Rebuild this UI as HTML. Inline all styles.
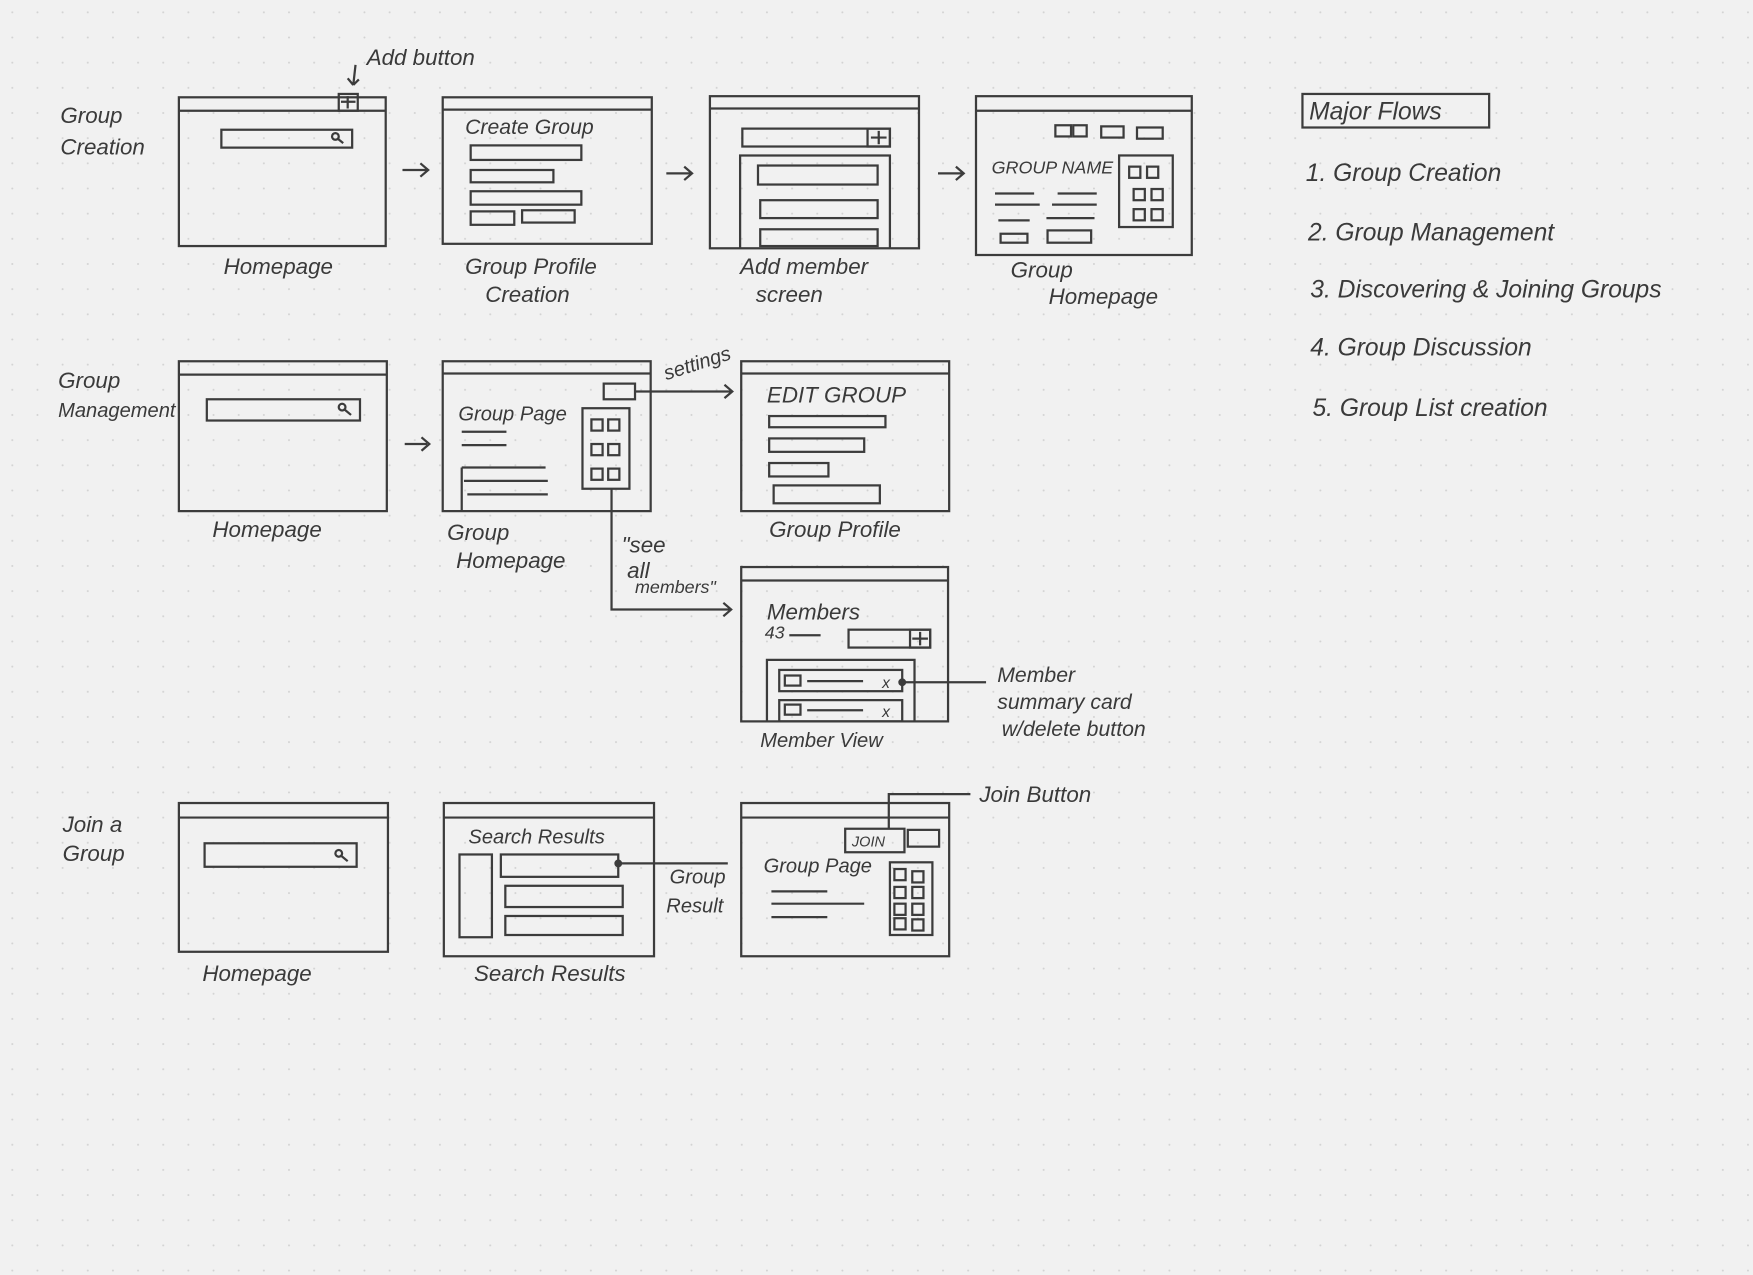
<!DOCTYPE html>
<html><head><meta charset="utf-8"><style>
html,body{margin:0;padding:0;background:#f1f1f1;}
svg{display:block;width:1753px;height:1275px;}
text{font-family:"Liberation Sans",sans-serif;font-style:italic;fill:#3a3a3a;}
</style></head><body>
<svg viewBox="0 0 1568 1140" preserveAspectRatio="none" xmlns="http://www.w3.org/2000/svg">
<defs>
<pattern id="dots" width="22.5" height="22.5" patternUnits="userSpaceOnUse"><circle cx="11" cy="11" r="0.9" fill="#d2d2d2"/></pattern>
</defs>
<rect width="1568" height="1140" fill="#f1f1f1"/>
<rect width="1568" height="1140" fill="url(#dots)"/>
<g fill="none" stroke="#3c3c3c" stroke-width="2">
<rect x="160" y="87" width="185" height="133"/><line x1="160" y1="99" x2="345" y2="99"/>
<rect x="303" y="84" width="17" height="15"/><path d="M311 86v11M305 91h13"/>
<rect x="198" y="116" width="117" height="16"/><circle cx="300" cy="122" r="3"/><path d="M302 124l5 4"/>
<path d="M318 58l-2 18M316 76l-5-6M316 76l5-5"/>
<rect x="396" y="87" width="187" height="131"/><line x1="396" y1="98" x2="583" y2="98"/>
<rect x="421" y="130" width="99" height="13"/><rect x="421" y="152" width="74" height="11"/><rect x="421" y="171" width="99" height="12"/><rect x="421" y="189" width="39" height="12"/><rect x="467" y="188" width="47" height="11"/>
<rect x="635" y="86" width="187" height="136"/><line x1="635" y1="97" x2="822" y2="97"/>
<rect x="664" y="115" width="132" height="16"/><rect x="776" y="115" width="20" height="16"/><path d="M786 117v12M779 123h14"/>
<path d="M662 222V139h134v83"/>
<rect x="678" y="148" width="107" height="17"/><rect x="680" y="179" width="105" height="16"/><rect x="680" y="205" width="105" height="15"/>
<rect x="873" y="86" width="193" height="142"/><line x1="873" y1="99" x2="1066" y2="99"/>
<rect x="944" y="112" width="14" height="10"/><rect x="960" y="112" width="12" height="10"/><rect x="985" y="113" width="20" height="10"/><rect x="1017" y="114" width="23" height="10"/>
<rect x="1001" y="139" width="48" height="64"/>
<rect x="1010" y="149" width="10" height="10"/><rect x="1026" y="149" width="10" height="10"/><rect x="1014" y="169" width="10" height="10"/><rect x="1030" y="169" width="10" height="10"/><rect x="1014" y="187" width="10" height="10"/><rect x="1030" y="187" width="10" height="10"/>
<path d="M890 173h35M946 173h35M890 183h40M941 183h40M893 197h28M936 195h43"/><rect x="895" y="209" width="24" height="8"/><rect x="937" y="206" width="39" height="11"/>
<path d="M360 152h22M376 146l7 6-7 6M596 155h22M612 149l7 6-7 6M839 155h22M855 149l7 6-7 6"/>
<rect x="160" y="323" width="186" height="134"/><line x1="160" y1="335" x2="346" y2="335"/>
<rect x="185" y="357" width="137" height="19"/><circle cx="306" cy="364" r="3"/><path d="M308 366l6 5"/>
<path d="M362 397h20M377 391l7 6-7 6"/>
<rect x="396" y="323" width="186" height="134"/><line x1="396" y1="334" x2="582" y2="334"/>
<rect x="540" y="343" width="28" height="14"/><rect x="521" y="365" width="42" height="72"/>
<rect x="529" y="375" width="10" height="10"/><rect x="544" y="375" width="10" height="10"/><rect x="529" y="397" width="10" height="10"/><rect x="544" y="397" width="10" height="10"/><rect x="529" y="419" width="10" height="10"/><rect x="544" y="419" width="10" height="10"/>
<path d="M413 386h40M413 398h40M413 418h75M413 418v38M415 430h75M418 442h72"/>
<path d="M568 350h86M648 344l7 6-7 6"/>
<path d="M547 437v108h106M647 539l7 6-7 6"/>
<rect x="663" y="323" width="186" height="134"/><line x1="663" y1="334" x2="849" y2="334"/>
<rect x="688" y="372" width="104" height="10"/><rect x="688" y="392" width="85" height="12"/><rect x="688" y="414" width="53" height="12"/><rect x="692" y="434" width="95" height="16"/>
<rect x="663" y="507" width="185" height="138"/><line x1="663" y1="519" x2="848" y2="519"/>
<path d="M706 568h28"/><rect x="759" y="563" width="73" height="16"/><rect x="814" y="563" width="18" height="16"/><path d="M823 565v12M816 571h14"/>
<path d="M686 645V590h132v55"/>
<rect x="697" y="599" width="110" height="19"/><rect x="702" y="604" width="14" height="9"/><path d="M722 609h50"/>
<rect x="697" y="626" width="110" height="19"/><rect x="702" y="630" width="14" height="9"/><path d="M722 635h50"/>
<path d="M807 610h75"/><circle cx="807" cy="610" r="2.5" fill="#3c3c3c"/>
<rect x="160" y="718" width="187" height="133"/><line x1="160" y1="731" x2="347" y2="731"/>
<rect x="183" y="754" width="136" height="21"/><circle cx="303" cy="763" r="3"/><path d="M305 765l6 5"/>
<rect x="397" y="718" width="188" height="137"/><line x1="397" y1="731" x2="585" y2="731"/>
<rect x="411" y="764" width="29" height="74"/><rect x="448" y="764" width="105" height="20"/><rect x="452" y="792" width="105" height="19"/><rect x="452" y="819" width="105" height="17"/>
<path d="M553 772h98"/><circle cx="553" cy="772" r="2.5" fill="#3c3c3c"/>
<rect x="663" y="718" width="186" height="137"/><line x1="663" y1="731" x2="849" y2="731"/>
<rect x="756" y="741" width="53" height="21"/><rect x="812" y="742" width="28" height="15"/>
<rect x="796" y="771" width="38" height="65"/>
<rect x="800" y="777" width="10" height="10"/><rect x="816" y="779" width="10" height="10"/><rect x="800" y="793" width="10" height="10"/><rect x="816" y="793" width="10" height="10"/><rect x="800" y="808" width="10" height="10"/><rect x="816" y="808" width="10" height="10"/><rect x="800" y="821" width="10" height="10"/><rect x="816" y="822" width="10" height="10"/>
<path d="M690 797h50M690 808h83M690 820h50"/>
<path d="M795 741v-31h73"/>
<rect x="1165" y="84" width="167" height="30"/>
</g>
<g font-size="20">
<text x="328" y="58">Add button</text>
<text x="54" y="110">Group</text><text x="54" y="138">Creation</text>
<text x="200" y="245">Homepage</text>
<text x="416" y="120" font-size="19">Create Group</text>
<text x="416" y="245">Group Profile</text><text x="434" y="270">Creation</text>
<text x="662" y="245">Add member</text><text x="676" y="270">screen</text>
<text x="887" y="155" font-size="16">GROUP NAME</text>
<text x="904" y="248">Group</text><text x="938" y="272">Homepage</text>
<text x="52" y="347">Group</text><text x="52" y="373" font-size="18">Management</text>
<text x="190" y="480">Homepage</text>
<text x="410" y="376" font-size="18">Group Page</text>
<text x="400" y="483">Group</text><text x="408" y="508">Homepage</text>
<text x="596" y="340" font-size="18" transform="rotate(-18 596 340)">settings</text>
<text x="686" y="360">EDIT GROUP</text>
<text x="688" y="480">Group Profile</text>
<text x="556" y="494">"see</text><text x="561" y="517">all</text><text x="568" y="530" font-size="16">members"</text>
<text x="686" y="554">Members</text><text x="684" y="571" font-size="16">43</text>
<text x="789" y="615" font-size="14">x</text><text x="789" y="641" font-size="14">x</text>
<text x="680" y="668" font-size="18">Member View</text>
<text x="892" y="610" font-size="19">Member</text><text x="892" y="634" font-size="19">summary card</text><text x="896" y="658" font-size="19">w/delete button</text>
<text x="56" y="744">Join a</text><text x="56" y="770">Group</text>
<text x="181" y="877">Homepage</text>
<text x="419" y="754" font-size="18">Search Results</text>
<text x="424" y="877">Search Results</text>
<text x="599" y="790" font-size="18">Group</text><text x="596" y="816" font-size="18">Result</text>
<text x="762" y="757" font-size="13">JOIN</text>
<text x="683" y="780" font-size="18">Group Page</text>
<text x="876" y="717">Join Button</text>
<text x="1171" y="107" font-size="22">Major Flows</text>
<text x="1168" y="162" font-size="22">1. Group Creation</text>
<text x="1170" y="215" font-size="22">2. Group Management</text>
<text x="1172" y="266" font-size="22">3. Discovering &amp; Joining Groups</text>
<text x="1172" y="318" font-size="22">4. Group Discussion</text>
<text x="1174" y="372" font-size="22">5. Group List creation</text>
</g>
</svg>
</body></html>
